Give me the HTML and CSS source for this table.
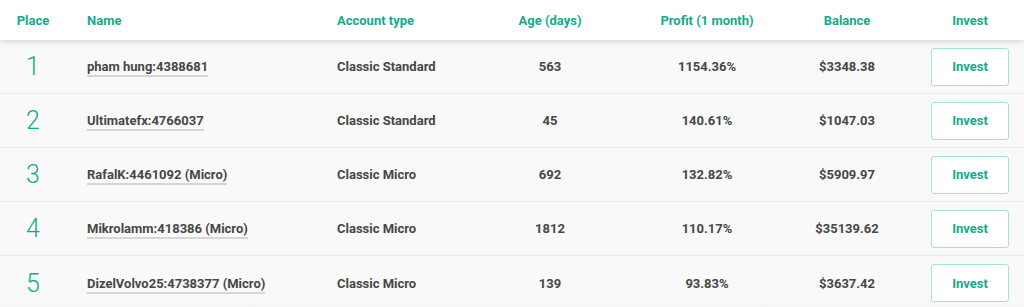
FILE: index.html
```html
<!DOCTYPE html>
<html lang="en">
<head>
    <meta charset="UTF-8">
    <title>Top accounts</title>
    <link rel="stylesheet" href="styles.css">
</head>
<body>
    <div class="ranking">
        <div class="head">
            <div>Place</div>
            <div class="left">Name</div>
            <div class="left">Account type</div>
            <div>Age (days)</div>
            <div>Profit (1 month)</div>
            <div>Balance</div>
            <div>Invest</div>
        </div>

        <div class="row">
            <div class="place">1</div>
            <div class="left"><a class="name" href="#">pham hung:4388681</a></div>
            <div class="left">Classic Standard</div>
            <div>563</div>
            <div>1154.36%</div>
            <div>$3348.38</div>
            <div><button class="invest">Invest</button></div>
        </div>
        <div class="row">
            <div class="place">2</div>
            <div class="left"><a class="name" href="#">Ultimatefx:4766037</a></div>
            <div class="left">Classic Standard</div>
            <div>45</div>
            <div>140.61%</div>
            <div>$1047.03</div>
            <div><button class="invest">Invest</button></div>
        </div>
        <div class="row">
            <div class="place">3</div>
            <div class="left"><a class="name" href="#">RafalK:4461092 (Micro)</a></div>
            <div class="left">Classic Micro</div>
            <div>692</div>
            <div>132.82%</div>
            <div>$5909.97</div>
            <div><button class="invest">Invest</button></div>
        </div>
        <div class="row">
            <div class="place">4</div>
            <div class="left"><a class="name" href="#">Mikrolamm:418386 (Micro)</a></div>
            <div class="left">Classic Micro</div>
            <div>1812</div>
            <div>110.17%</div>
            <div>$35139.62</div>
            <div><button class="invest">Invest</button></div>
        </div>
        <div class="row">
            <div class="place">5</div>
            <div class="left"><a class="name" href="#">DizelVolvo25:4738377 (Micro)</a></div>
            <div class="left">Classic Micro</div>
            <div>139</div>
            <div>93.83%</div>
            <div>$3637.42</div>
            <div><button class="invest">Invest</button></div>
        </div>
    </div>
</body>
</html>
```

FILE: styles.css
```css
* {
    margin: 0;
    padding: 0;
    box-sizing: border-box;
}

body {
    background: #fff;
    font-family: Roboto, 'Liberation Sans', sans-serif;
    font-size: 13px;
    font-weight: 700;
    color: #474747;
}

.ranking {
    width: 1024px;
}

.head,
.row {
    display: grid;
    grid-template-columns: 66px 271px 127px 172px 142px 138px 108px;
    align-items: center;
    text-align: center;
}

.head {
    height: 40px;
    background: #fff;
    color: #17a98b;
    position: relative;
    z-index: 1;
    box-shadow: 0 2px 6px rgba(0, 0, 0, 0.14);
}

.row {
    height: 54px;
    background: #f9f9f9;
    border-bottom: 1px solid #ebebeb;
}

/* soft shade at the bottom edge of the list */
.row:last-child {
    border-bottom: none;
    background: linear-gradient(to bottom, #f9f9f9 86%, #f0f0f0);
}

.left {
    text-align: left;
}

.head .left:nth-child(2),
.row .left:nth-child(2) {
    padding-left: 21px;
}

.place {
    font-size: 25px;
    font-weight: 300;
    color: #17a98b;
}

.name {
    color: #474747;
    text-decoration: none;
    border-bottom: 2px solid #d6d6d6;
    padding-bottom: 1px;
}

.invest {
    width: 78px;
    height: 38px;
    background: #fff;
    border: 1.5px solid #a3e2d2;
    border-radius: 3px;
    color: #17a98b;
    font-family: inherit;
    font-size: 13px;
    font-weight: 700;
    cursor: pointer;
}
```
